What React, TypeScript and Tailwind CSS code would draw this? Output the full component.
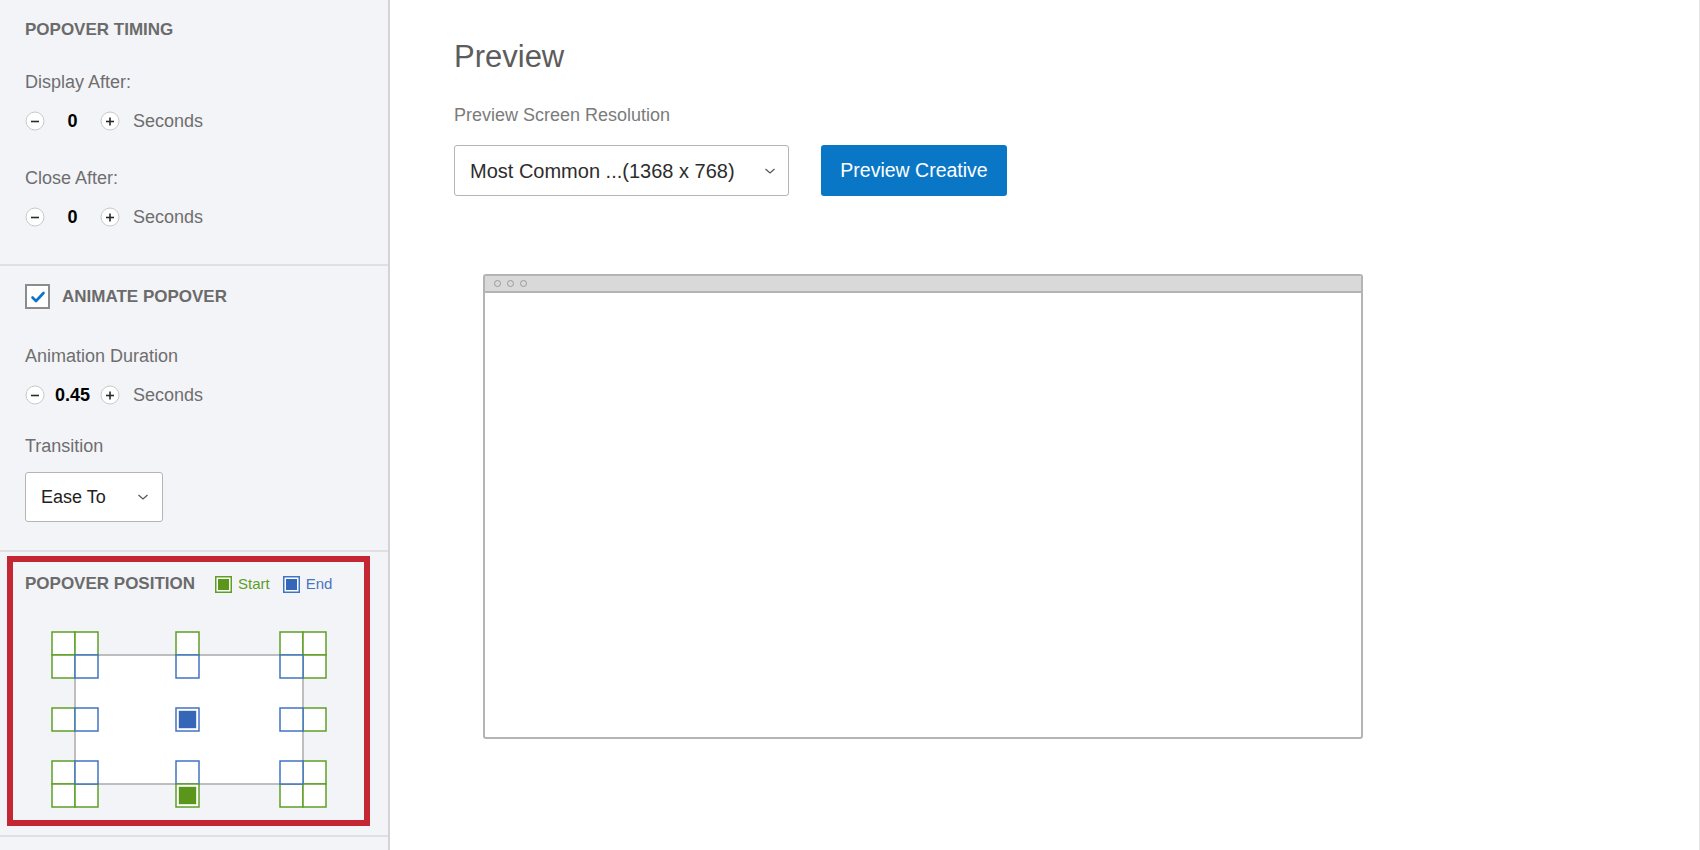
import React from "react";

const FONT = { fontFamily: '"Liberation Sans", Arial, sans-serif' };

function CircleBtn({ plus }: { plus?: boolean }) {
  return (
    <svg width="20" height="20" viewBox="0 0 20 20" className="shrink-0">
      <circle cx="10" cy="10" r="9" fill="#ffffff" stroke="#c9c9c9" strokeWidth="1" />
      <line x1="6" y1="10.5" x2="14" y2="10.5" stroke="#2b2b2b" strokeWidth="1.6" />
      {plus && <line x1="10" y1="6.5" x2="10" y2="14.5" stroke="#2b2b2b" strokeWidth="1.6" />}
    </svg>
  );
}

function Stepper({ value }: { value: string }) {
  return (
    <div className="flex items-center h-[20px]">
      <CircleBtn />
      <div className="w-[55px] text-center text-[18px] font-bold text-black leading-[20px]">{value}</div>
      <CircleBtn plus />
      <span className="ml-[13px] text-[18px] text-[#6e6e6e] leading-[20px]">Seconds</span>
    </div>
  );
}

function Chevron() {
  return (
    <svg width="12" height="8" viewBox="0 0 12 8">
      <polyline points="1.5,2 6,6 10.5,2" fill="none" stroke="#555555" strokeWidth="1.2" />
    </svg>
  );
}

const GREEN = "#5f9e25";
const BLUE = "#4173c4";

function Picker() {
  const greens: [number, number][] = [
    [12, 12], [35, 12], [12, 35],
    [136, 12],
    [240, 12], [263, 12], [263, 35],
    [12, 88],
    [263, 88],
    [12, 141], [12, 164], [35, 164],
    [263, 141], [240, 164], [263, 164],
  ];
  const blues: [number, number][] = [
    [35, 35], [136, 35], [240, 35],
    [35, 88], [240, 88],
    [35, 141], [136, 141], [240, 141],
  ];
  const S = 23;
  return (
    <svg width="300" height="200" viewBox="0 0 300 200">
      <rect x="35" y="35" width="228" height="129" fill="#ffffff" stroke="#ababab" strokeWidth="1.5" />
      {greens.map(([x, y], i) => (
        <rect key={"g" + i} x={x} y={y} width={S} height={S} fill="#ffffff" stroke={GREEN} strokeWidth="1.5" />
      ))}
      {blues.map(([x, y], i) => (
        <rect key={"b" + i} x={x} y={y} width={S} height={S} fill="#ffffff" stroke={BLUE} strokeWidth="1.5" />
      ))}
      <rect x="136" y="88" width={S} height={S} fill="#ffffff" stroke={BLUE} strokeWidth="1.5" />
      <rect x="138.8" y="90.8" width="17.4" height="17.4" fill="#3566b8" />
      <rect x="136" y="164" width={S} height={S} fill="#ffffff" stroke={GREEN} strokeWidth="1.5" />
      <rect x="138.8" y="166.8" width="17.4" height="17.4" fill="#5a961a" />
    </svg>
  );
}

function LegendSwatch({ stroke, fill }: { stroke: string; fill: string }) {
  return (
    <svg width="17" height="17" viewBox="0 0 17 17" className="shrink-0">
      <rect x="0.75" y="0.75" width="15.5" height="15.5" fill="#ffffff" stroke={stroke} strokeWidth="1.5" />
      <rect x="3" y="3" width="11" height="11" fill={fill} />
    </svg>
  );
}

export default function App() {
  return (
    <div className="flex w-[1700px] h-[850px] overflow-hidden bg-white" style={FONT}>
      {/* Sidebar */}
      <aside className="w-[390px] h-full shrink-0 bg-[#f3f4f8] border-r-2 border-[#d4d4d4] flex flex-col">
        {/* Timing */}
        <section className="h-[266px] border-b-2 border-[#e0e0e3] px-[25px] pt-[20px]">
          <div className="text-[17px] font-bold text-[#6b6b6b] leading-[20px]">POPOVER TIMING</div>
          <div className="mt-[31px] text-[18px] text-[#6e6e6e] leading-[22px]">Display After:</div>
          <div className="mt-[18px]"><Stepper value="0" /></div>
          <div className="mt-[36px] text-[18px] text-[#6e6e6e] leading-[22px]">Close After:</div>
          <div className="mt-[18px]"><Stepper value="0" /></div>
        </section>

        {/* Animate */}
        <section className="h-[286px] border-b-2 border-[#e0e0e3] px-[25px] pt-[18px]">
          <div className="flex items-center h-[25px]">
            <div className="w-[25px] h-[25px] border-2 border-[#8c8c8c] bg-white flex items-center justify-center">
              <svg width="16" height="14" viewBox="0 0 16 14">
                <polyline points="2.5,7.5 6,11 13.5,3" fill="none" stroke="#0b74c8" strokeWidth="2.6" strokeLinecap="round" strokeLinejoin="round" />
              </svg>
            </div>
            <span className="ml-[12px] text-[17px] font-bold text-[#6b6b6b]">ANIMATE POPOVER</span>
          </div>
          <div className="mt-[36px] text-[18px] text-[#6e6e6e] leading-[22px]">Animation Duration</div>
          <div className="mt-[18px]"><Stepper value="0.45" /></div>
          <div className="mt-[30px] text-[18px] text-[#6e6e6e] leading-[22px]">Transition</div>
          <div className="mt-[15px] w-[138px] h-[50px] bg-white border border-[#b5b5b5] rounded-[3px] flex items-center justify-between pl-[15px] pr-[13px]">
            <span className="text-[18px] text-[#222222]">Ease To</span>
            <Chevron />
          </div>
        </section>

        {/* Position */}
        <section className="h-[285px] border-b-2 border-[#e0e0e3] pt-[4px] pl-[7px]">
          <div className="w-[363px] h-[270px] border-[6px] border-[#c52633] pt-[12px] pl-[12px]">
            <div className="flex items-center h-[20px]">
              <span className="text-[17px] font-bold text-[#6b6b6b] leading-[20px]">POPOVER POSITION</span>
              <div className="ml-[20px] flex items-center">
                <LegendSwatch stroke={GREEN} fill="#5a961a" />
                <span className="ml-[6px] text-[15px] text-[#5f9e25]">Start</span>
              </div>
              <div className="ml-[13px] flex items-center">
                <LegendSwatch stroke={BLUE} fill="#3566b8" />
                <span className="ml-[6px] text-[15px] text-[#4a74c0]">End</span>
              </div>
            </div>
            <div className="mt-[26px] ml-[15px]">
              <Picker />
            </div>
          </div>
        </section>
      </aside>

      {/* Main */}
      <main className="flex-1 h-full border-r border-[#e6e6e6] pl-[64px] pt-[39px]">
        <h1 className="text-[31px] leading-[36px] text-[#5c5c5c]">Preview</h1>
        <div className="mt-[29px] text-[18px] leading-[22px] text-[#7b7b7b]">Preview Screen Resolution</div>
        <div className="mt-[19px] flex items-center gap-[32px]">
          <div className="w-[335px] h-[51px] border border-[#b5b5b5] rounded-[3px] bg-white flex items-center justify-between pl-[15px] pr-[12px]">
            <span className="text-[20px] text-[#2d2d2d]">Most Common ...(1368 x 768)</span>
            <Chevron />
          </div>
          <button className="w-[186px] h-[51px] rounded-[3px] bg-[#0a77c6] text-white text-[19.5px]">Preview Creative</button>
        </div>
        <div className="mt-[78px] ml-[29px] w-[880px] h-[465px] border-2 border-[#b4b4b4] rounded-[3px] bg-white flex flex-col overflow-hidden">
          <div className="h-[17px] bg-[#d9d9d9] border-b-2 border-[#b4b4b4] flex items-center gap-[6px] pl-[9px]">
            <span className="w-[7px] h-[7px] rounded-full border-[1.5px] border-[#9a9a9a]" />
            <span className="w-[7px] h-[7px] rounded-full border-[1.5px] border-[#9a9a9a]" />
            <span className="w-[7px] h-[7px] rounded-full border-[1.5px] border-[#9a9a9a]" />
          </div>
          <div className="flex-1" />
        </div>
      </main>
    </div>
  );
}
